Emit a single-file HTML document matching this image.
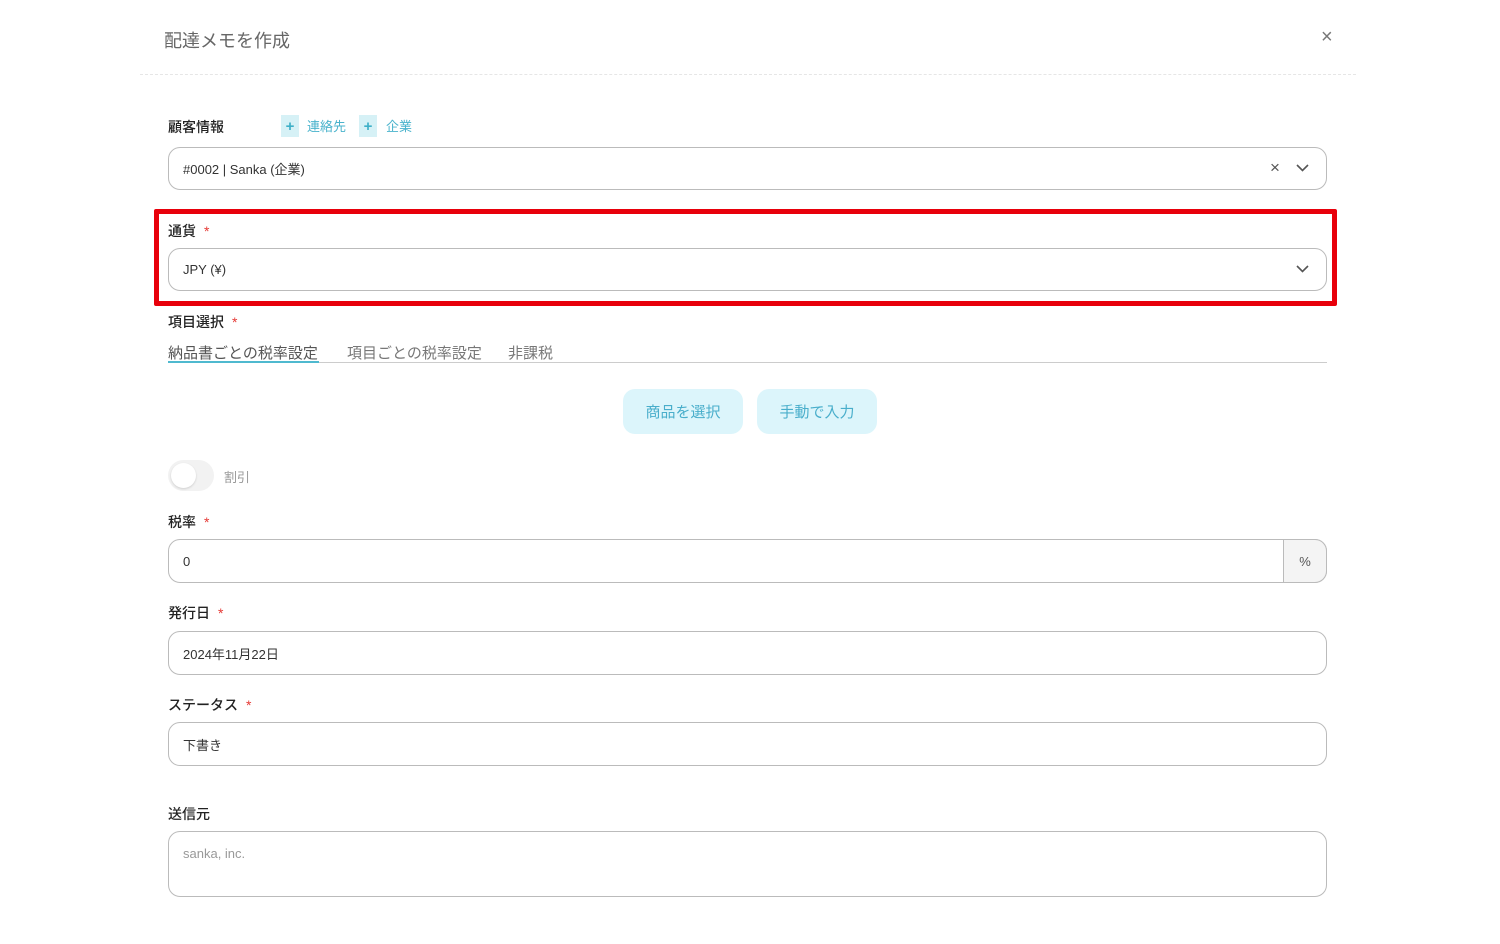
<!DOCTYPE html>
<html><head><meta charset="utf-8"><style>
*{box-sizing:border-box;margin:0;padding:0}
body{width:1500px;height:944px;background:#fff;font-family:"Liberation Sans","Noto Sans CJK JP",sans-serif;color:#333;position:relative;overflow:hidden}
.a{position:absolute}
.lbl{font-size:14px;color:#222;font-weight:500}
.req{color:#e53935;margin-left:8px}
.inp{position:absolute;left:168px;width:1159px;border:1px solid #bbb;border-radius:12px;font-size:13px;color:#333;padding-left:14px;display:flex;align-items:center}
.btn{position:absolute;top:389px;height:45px;width:120px;background:#dcf5fb;border-radius:12px;color:#49aecb;font-size:15px;display:flex;align-items:center;justify-content:center}
.plus{position:absolute;top:115px;width:18px;height:22px;background:#d6f1f6;color:#3fb0c8;font-weight:bold;font-size:15px;text-align:center;line-height:24px}
.tab{position:absolute;top:342px;font-size:15px}
</style></head><body>
<div class="a" style="left:164px;top:27px;font-size:18px;color:#666">配達メモを作成</div>
<div class="a" style="left:1321px;top:26px;font-size:20px;color:#777">×</div>
<div class="a" style="left:140px;top:74px;width:1216px;border-top:1px dashed #e6e6e6"></div>

<div class="a lbl" style="left:168px;top:117px">顧客情報</div>
<div class="plus" style="left:281px">+</div>
<div class="a" style="left:307px;top:116px;font-size:13px;color:#4ab3cc">連絡先</div>
<div class="plus" style="left:359px">+</div>
<div class="a" style="left:386px;top:116px;font-size:13px;color:#4ab3cc">企業</div>
<div class="inp" style="top:147px;height:43px">#0002 | Sanka (企業)</div>
<div class="a" style="left:1270px;top:158px;font-size:17px;color:#555">×</div>
<svg class="a" style="left:1296px;top:164px" width="13" height="9"><path d="M1 1l5.5 5.5L12 1" stroke="#555" stroke-width="1.6" fill="none"/></svg>

<div class="a" style="left:154px;top:209px;width:1183px;height:97px;border:5px solid #e8000b;border-radius:2px"></div>
<div class="a lbl" style="left:168px;top:221px">通貨<span class="req">*</span></div>
<div class="inp" style="top:248px;height:43px">JPY (¥)</div>
<svg class="a" style="left:1296px;top:265px" width="13" height="9"><path d="M1 1l5.5 5.5L12 1" stroke="#555" stroke-width="1.6" fill="none"/></svg>

<div class="a lbl" style="left:168px;top:312px">項目選択<span class="req">*</span></div>
<div class="tab" style="left:168px;color:#555">納品書ごとの税率設定</div>
<div class="tab" style="left:347px;color:#777">項目ごとの税率設定</div>
<div class="tab" style="left:508px;color:#777">非課税</div>
<div class="a" style="left:168px;top:362px;width:1159px;border-top:1px solid #ccc"></div>
<div class="a" style="left:168px;top:361px;width:151px;border-top:2px solid #4fb9cf"></div>

<div class="btn" style="left:623px">商品を選択</div>
<div class="btn" style="left:757px">手動で入力</div>

<div class="a" style="left:168px;top:460px;width:46px;height:31px;border-radius:16px;background:#f2f2f2"></div>
<div class="a" style="left:171px;top:463px;width:25px;height:25px;border-radius:50%;background:#fff;box-shadow:0 1px 2px rgba(0,0,0,.15)"></div>
<div class="a" style="left:224px;top:467px;font-size:13px;color:#999">割引</div>

<div class="a lbl" style="left:168px;top:512px">税率<span class="req">*</span></div>
<div class="inp" style="top:539px;height:44px">0</div>
<div class="a" style="left:1283px;top:539px;width:44px;height:44px;background:#f4f4f4;border:1px solid #bbb;border-radius:0 12px 12px 0;font-size:13px;color:#555;display:flex;align-items:center;justify-content:center">%</div>

<div class="a lbl" style="left:168px;top:603px">発行日<span class="req">*</span></div>
<div class="inp" style="top:631px;height:44px">2024年11月22日</div>

<div class="a lbl" style="left:168px;top:695px">ステータス<span class="req">*</span></div>
<div class="inp" style="top:722px;height:44px">下書き</div>

<div class="a lbl" style="left:168px;top:804px">送信元</div>
<div class="inp" style="top:831px;height:66px;align-items:flex-start;padding-top:14px;color:#999">sanka, inc.</div>
</body></html>
